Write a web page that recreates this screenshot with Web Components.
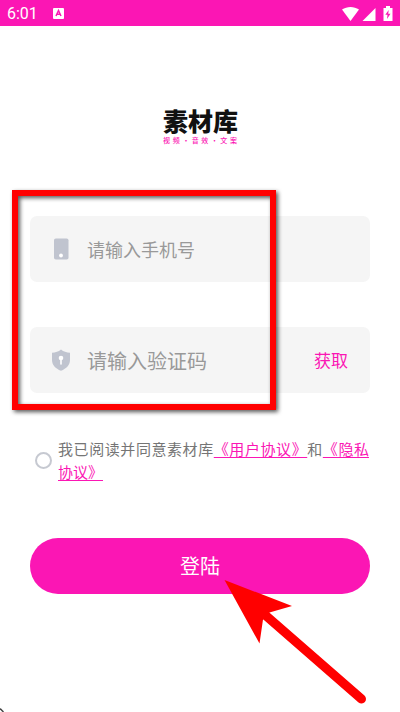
<!DOCTYPE html>
<html lang="zh-CN">
<head>
<meta charset="utf-8">
<meta name="viewport" content="width=device-width, initial-scale=1">
<title>素材库</title>
<style>
html, body { margin: 0; min-height: 100%; background: #fff; }
body { font-family: "Noto Sans CJK SC", sans-serif; color: #757575; --brand: #fb16b4; --mark: #f00; }
</style>
</head>
<body>
<login-screen></login-screen>

<script>
const define = (name, html, setup) => {
  const template = document.createElement('template');
  template.innerHTML = html;
  customElements.define(name, class extends HTMLElement {
    connectedCallback() {
      if (this.shadowRoot) return;
      this.attachShadow({ mode: 'open' }).append(template.content.cloneNode(true));
      if (setup) setup(this, this.shadowRoot);
    }
  });
};

define('status-bar', `
<style>
  :host { display: flex; align-items: center; box-sizing: border-box; height: 26px; padding: 2px 7px 0; background: var(--brand); color: #fff; font: 16px/24px Roboto, sans-serif; }
  svg { display: block; }
  .app { margin-left: 15px; }
  .system { margin-left: auto; }
</style>
<span>6:01</span>
<svg class="app" width="11" height="12" viewBox="0 0 11 12"><rect width="11" height="11" rx="1" fill="#fff"/><path d="M3 8 5.500 2.500 8 8M4 6.300h3" fill="none" stroke="#fb16b4" stroke-width="1.500"/></svg>
<svg class="system" width="51" height="18" viewBox="0 0 51 18" fill="#fff">
  <path d="M0 4.500C5 1 12 1 17 4.500L8.500 16Z"/>
  <path d="M33.500 3v13H20.500Z"/>
  <path d="M44 1h4v2h2.500v13H41.500V3H44Z"/>
  <path d="M46.700 5 43.300 9.700h2.200L45 14l3.500-5.200h-2.300Z" fill="#fb16b4"/>
</svg>`);

define('brand-logo', `
<style>
  :host { display: block; width: 74px; margin: 0 auto; }
  h1 { margin: 0; font-size: 25px; line-height: 26px; font-weight: 900; color: #111; white-space: nowrap; }
  p { margin: 2px 0 0; font-size: 7px; line-height: 10px; font-weight: 500; color: var(--brand); text-align-last: justify; white-space: nowrap; }
</style>
<h1>素材库</h1>
<p>视 频 · 音 效 · 文 案</p>`);

define('entry-field', `
<style>
  :host { display: block; }
  .box { display: flex; align-items: center; height: 66px; padding: 0 22px 0 20px; border-radius: 7px; background: #f5f5f5; }
  label { display: flex; flex: none; }
  input { flex: 1; min-width: 0; height: 40px; margin: 0 0 0 15px; padding: 0; border: 0; outline: 0; background: none; font-family: inherit; font-size: var(--entry-size, 18px); color: #333; }
  input::placeholder { color: #999; opacity: 1; }
</style>
<div class="box"><label for="entry"><slot name="icon"></slot></label><input id="entry"><slot name="action"></slot></div>`,
(host, root) => {
  const input = root.querySelector('input');
  input.type = host.getAttribute('type') || 'text';
  input.placeholder = host.getAttribute('hint');
  input.setAttribute('aria-label', host.getAttribute('hint'));
});

define('phone-icon', `
<style>:host, svg { display: block; }</style>
<svg width="22" height="22" viewBox="0 0 22 22"><rect x="4" y="0.500" width="14.500" height="21" rx="1.800" fill="#c0c4cf"/><circle cx="11" cy="17.500" r="1.900" fill="#fff"/></svg>`);

define('shield-icon', `
<style>:host, svg { display: block; }</style>
<svg width="22" height="22" viewBox="0 0 22 22"><path d="M11 0.500C8.500 2.700 5.500 3.500 2 3.700V11c0 5 3.500 8.500 9 10.800C16.500 19.500 20 16 20 11V3.700C16.500 3.500 13.500 2.700 11 0.500Z" fill="#c0c4cf"/><circle cx="11" cy="9" r="2.300" fill="#fff"/><path d="M11 10v5" stroke="#fff" stroke-width="1.600" stroke-linecap="round"/></svg>`);

define('text-button', `
<style>
  :host { display: block; flex: none; }
  button { display: block; margin: 0; padding: 0; border: 0; background: none; color: var(--brand); font: 17px/26px "Noto Sans CJK SC", sans-serif; }
</style>
<button type="button"><slot></slot></button>`);

define('agreement-check', `
<style>
  :host { display: flex; align-items: center; padding-left: 5px; font-size: 15px; line-height: 23px; }
  input { appearance: none; flex: none; box-sizing: border-box; width: 17px; height: 17px; margin: 0 6px 0 0; border: 2px solid #c6c9d1; border-radius: 50%; background: #fff; }
  input:checked { background: var(--brand); }
  label { flex: 1; padding-right: 1px; text-align: justify; }
  a { color: var(--brand); text-decoration: underline; text-decoration-thickness: 1px; text-underline-offset: 2px; }
</style>
<input type="checkbox" id="agree"><label for="agree">我已阅读并同意素材库<a href="#terms">《用户协议》</a>和<a href="#privacy">《隐私<wbr>协议》</a></label>`);

define('submit-button', `
<style>
  :host { display: block; }
  button { display: block; width: 100%; height: 56px; margin: 0; padding: 0; border: 0; border-radius: 28px; background: var(--brand); color: #fff; font: 20px/30px "Noto Sans CJK SC", sans-serif; }
</style>
<button type="submit"><slot></slot></button>`);

define('guide-marks', `
<style>
  :host { position: absolute; inset: 0; pointer-events: none; }
  .frame { position: absolute; left: 12px; top: 190px; width: 252px; height: 208px; border: 6px solid var(--mark); filter: drop-shadow(2px 2px 2px #000a); }
  svg { position: absolute; left: 220px; top: 576px; }
  .corner { left: 0; top: 708px; }
</style>
<div class="frame"></div>
<svg width="150" height="134" viewBox="220 576 150 134"><path d="M224.500 580 292 606 269.500 612.500 263 619.500 259.500 643.500Z" fill="#f00"/><path d="M264 614 361.500 699" stroke="#f00" stroke-width="9" stroke-linecap="round"/></svg>
<svg class="corner" width="4" height="4" viewBox="0 0 4 4"><path d="M0 0.500 3.500 4" stroke="#444" stroke-width="1.500"/></svg>`);

define('login-screen', `
<style>
  :host { display: block; position: relative; min-height: 100vh; }
  main { padding: 81px 30px 0; }
  form { margin: 71px 0 0; }
  .fields { display: grid; gap: 45px; }
  agreement-check { margin: 44px 0 55px; }
  .code { --entry-size: 20px; }
</style>
<status-bar></status-bar>
<main>
  <brand-logo></brand-logo>
  <form>
    <div class="fields">
      <entry-field type="tel" hint="请输入手机号"><phone-icon slot="icon"></phone-icon></entry-field>
      <entry-field class="code" hint="请输入验证码"><shield-icon slot="icon"></shield-icon><text-button slot="action">获取</text-button></entry-field>
    </div>
    <agreement-check></agreement-check>
    <submit-button>登陆</submit-button>
  </form>
</main>
<guide-marks></guide-marks>`);
</script>
</body>
</html>
